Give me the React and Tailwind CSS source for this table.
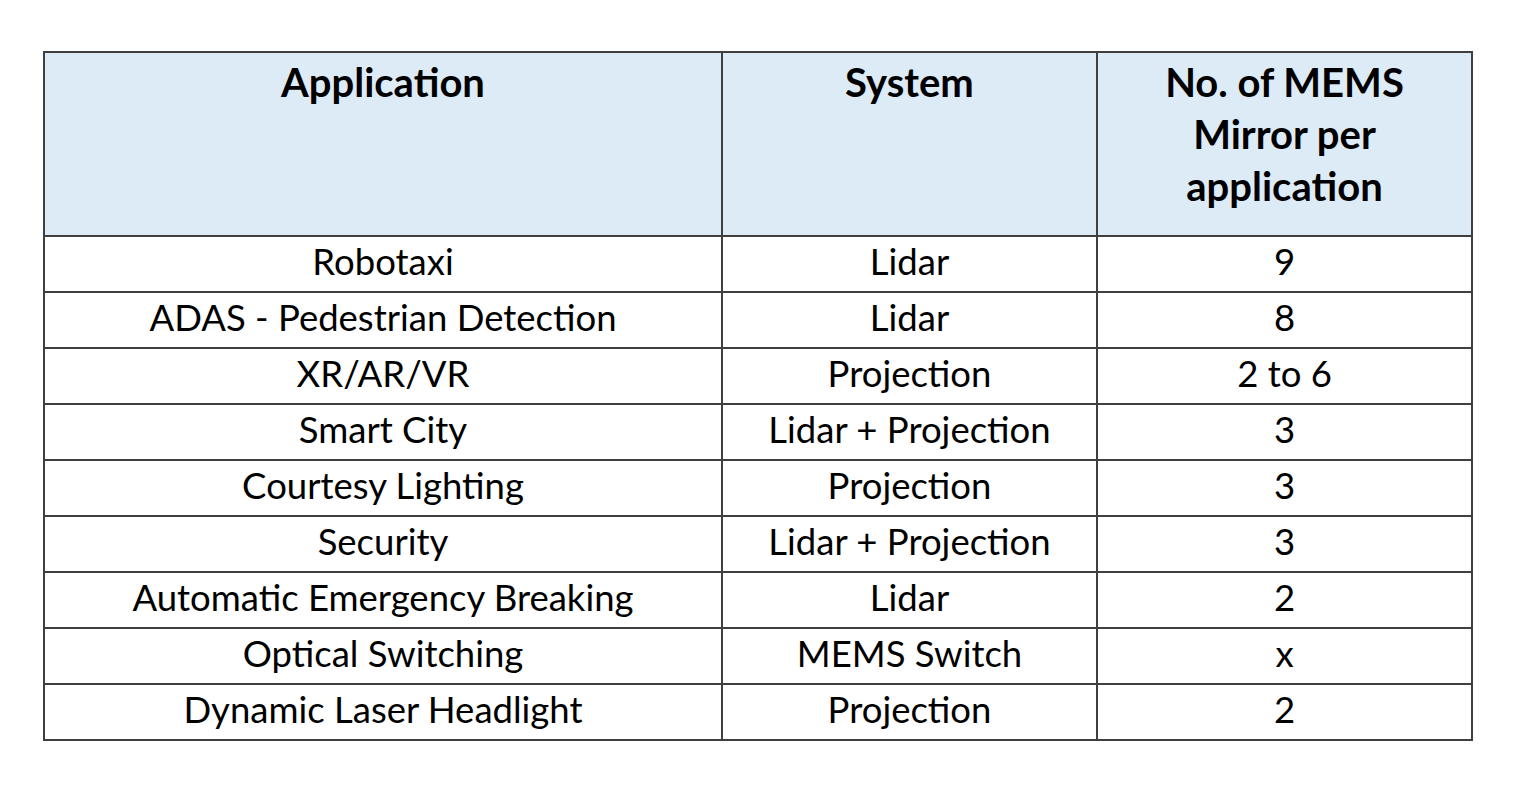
import React from "react";

const rows = [
  ["Robotaxi", "Lidar", "9"],
  ["ADAS - Pedestrian Detection", "Lidar", "8"],
  ["XR/AR/VR", "Projection", "2 to 6"],
  ["Smart City", "Lidar + Projection", "3"],
  ["Courtesy Lighting", "Projection", "3"],
  ["Security", "Lidar + Projection", "3"],
  ["Automatic Emergency Breaking", "Lidar", "2"],
  ["Optical Switching", "MEMS Switch", "x"],
  ["Dynamic Laser Headlight", "Projection", "2"],
];

export default function App() {
  return (
    <div className="w-[1526px] h-[804px] bg-white pt-[51px] pl-[43px] font-['Lato','Open_Sans',sans-serif] text-black">
      <table className="border-collapse table-fixed w-[1428px]">
        <colgroup>
          <col className="w-[678px]" />
          <col className="w-[375px]" />
          <col className="w-[375px]" />
        </colgroup>
        <thead>
          <tr className="h-[184px] bg-[#ddebf7]">
            {["Application", "System", "No. of MEMS Mirror per application"].map((h, i) => (
              <th
                key={i}
                className={`border-2 border-[#3f3f3f] align-top pt-[3px] text-[40px] font-bold leading-[52px] ${i === 2 ? "px-[50px]" : ""}`}
              >
                {h}
              </th>
            ))}
          </tr>
        </thead>
        <tbody>
          {rows.map((r) => (
            <tr key={r[0]} className="h-[56px]">
              {r.map((c, i) => (
                <td key={i} className="border-2 border-[#3f3f3f] text-center align-middle text-[36.5px] leading-[40px] pb-[6px]">
                  {c}
                </td>
              ))}
            </tr>
          ))}
        </tbody>
      </table>
    </div>
  );
}
